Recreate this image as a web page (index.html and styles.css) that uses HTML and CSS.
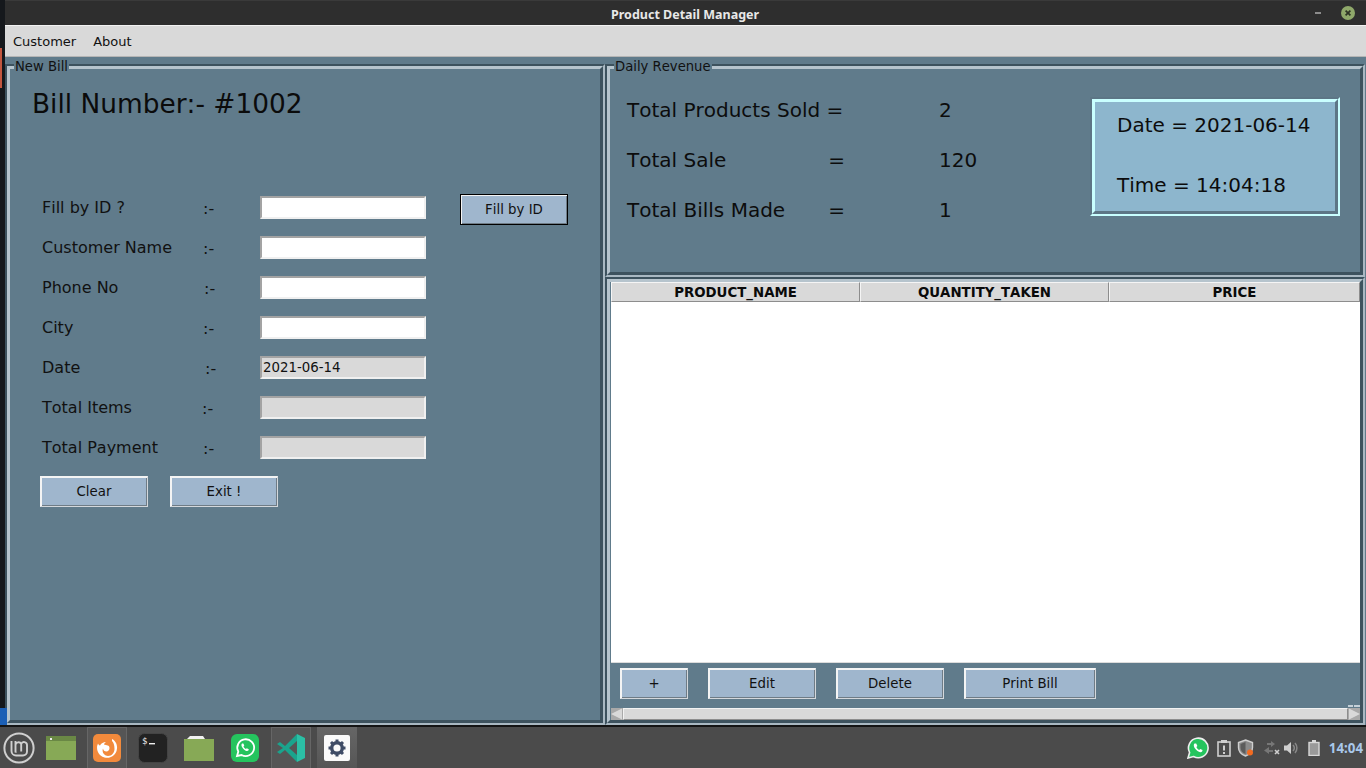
FILE: index.html
```html
<!DOCTYPE html>
<html lang="en">
<head>
<meta charset="utf-8">
<title>Product Detail Manager</title>
<link rel="stylesheet" href="styles.css">
</head>
<body>
<div class="desktop-edge"><span class="edge-red"></span><span class="edge-blue"></span></div>
<div class="window">
  <header class="titlebar">
    <span class="title">Product Detail Manager</span>
    <span class="win-min"></span>
    <span class="win-close"><svg viewBox="0 0 14 14" width="14" height="14"><circle cx="7" cy="7" r="7" fill="#8fa86a"/><path d="M4.6 4.6l4.8 4.8M9.4 4.6l-4.8 4.8" stroke="#2d3324" stroke-width="1.7"/></svg></span>
  </header>
  <nav class="menubar"><span class="menu-item">Customer</span><span class="menu-item">About</span></nav>
  <main class="workspace">
    <section class="frame frame-bill">
      <span class="legend">New Bill</span>
      <div class="frame-inner bill-inner">
        <h1 class="bill-number">Bill Number:- #1002</h1>
        <div class="form">
          <span class="f-label">Fill by ID ?</span><span class="f-colon">:-</span><span class="entry"></span><span class="btn btn-active">Fill by ID</span>
          <span class="f-label">Customer Name</span><span class="f-colon">:-</span><span class="entry"></span><span></span>
          <span class="f-label">Phone No</span><span class="f-colon shift-1">:-</span><span class="entry"></span><span></span>
          <span class="f-label">City</span><span class="f-colon">:-</span><span class="entry"></span><span></span>
          <span class="f-label">Date</span><span class="f-colon shift-2">:-</span><span class="entry entry-off">2021-06-14</span><span></span>
          <span class="f-label">Total Items</span><span class="f-colon shift-back">:-</span><span class="entry entry-off"></span><span></span>
          <span class="f-label">Total Payment</span><span class="f-colon">:-</span><span class="entry entry-off"></span><span></span>
        </div>
        <div class="form-actions"><span class="btn w108">Clear</span><span class="btn w108">Exit !</span></div>
      </div>
    </section>
    <div class="right-col">
      <section class="frame frame-revenue">
        <span class="legend">Daily Revenue</span>
        <div class="frame-inner revenue-inner">
          <div class="stats">
            <span>Total Products Sold =</span><span class="stat-val">2</span>
            <span class="stat-row"><span>Total Sale</span><span class="stat-eq">=</span></span><span class="stat-val">120</span>
            <span class="stat-row"><span>Total Bills Made</span><span class="stat-eq">=</span></span><span class="stat-val">1</span>
          </div>
          <div class="clock">
            <div class="clock-inner">
              <span class="clock-date">Date = 2021-06-14</span>
              <span class="clock-time">Time = 14:04:18</span>
            </div>
          </div>
        </div>
      </section>
      <section class="frame frame-table">
        <div class="frame-inner table-inner">
          <div class="thead"><span>PRODUCT_NAME</span><span>QUANTITY_TAKEN</span><span>PRICE</span></div>
          <div class="tbody"></div>
          <div class="table-actions">
            <span class="btn w68">+</span><span class="btn w108">Edit</span><span class="btn w108">Delete</span><span class="btn w132">Print Bill</span>
          </div>
          <div class="scrollbar">
            <span class="arrow"><svg viewBox="0 0 12 12" width="12" height="12"><path d="M0 6L11 .5v11z" fill="#d9d9d9"/></svg></span>
            <span class="trough"></span>
            <span class="arrow arrow-right"><svg viewBox="0 0 12 12" width="12" height="12"><path d="M12 6L1 .5v11z" fill="#d9d9d9"/></svg></span>
          </div>
        </div>
      </section>
    </div>
  </main>
  </div>
<footer class="taskbar">
  <span class="slot slot-menu">
    <svg viewBox="0 0 32 32" width="32" height="32"><circle cx="16" cy="16" r="14.6" fill="none" stroke="#cfcfcf" stroke-width="2"/><path d="M8.500 9v10a4.500 4.500 0 0 0 4.500 4.500h7a4 4 0 0 0 4-4v-6.500a3 3 0 0 0-5.800-1 3 3 0 0 0-5.700 1v7.500M18.200 12v7.500M12.500 9v10a1 1 0 0 0 1 1" fill="none" stroke="#cfcfcf" stroke-width="1.900"/></svg>
  </span>
  <span class="slot slot-w40">
    <svg viewBox="0 0 30 24" width="30" height="24"><rect width="30" height="24" fill="#87a956"/><rect width="30" height="5" fill="#6a8845"/><rect x="4" y="2" width="2" height="2" fill="#eee"/></svg>
  </span>
  <span class="slot slot-w40 slot-box">
    <svg viewBox="0 0 28 28" width="28" height="28"><rect width="28" height="28" rx="5" fill="#f28a3c"/><path d="M19 5c3 1.500 5.500 5 5 9.500A10 10 0 1 1 5 9.500c.5 1 1 1.600 2 2 1-2 3.500-3.500 6-3.500-1.500 1-2 2-2 2.500 2.500 1 5.500.5 5.500 3.500 0 2-1.500 3.500-3 3.500a3.500 3.500 0 0 1-3.500-3c-1.500 4 1.500 7.500 5 7.500 4 0 6.500-3.500 6.500-7 0-4-1-6.500-2.500-8z" fill="#fff"/></svg>
  </span>
  <span class="slot slot-w40">
    <svg viewBox="0 0 30 30" width="30" height="30"><rect x=".5" y=".5" width="29" height="29" rx="6" fill="#222" stroke="#444"/><text x="4" y="11" class="term-text">$</text><rect x="11" y="10" width="6" height="1.400" fill="#eee"/></svg>
  </span>
  <span class="slot slot-w40 slot-folder">
    <svg viewBox="0 0 30 26" width="30" height="26"><path d="M3 4l3-3h13l2 3z" fill="#f1f1f1"/><rect y="4" width="30" height="22" fill="#87a956"/></svg>
  </span>
  <span class="slot slot-w40 slot-wa">
    <svg viewBox="0 0 28 28" width="28" height="28"><rect width="28" height="28" rx="6" fill="#25c45e"/><path d="M6 22l1.300-4.400A8.400 8.400 0 1 1 10.600 21z" fill="none" stroke="#fff" stroke-width="1.800"/><path d="M11 9.500c-1 1-.8 3 1.200 5.200s4.200 2.800 5.200 1.800l.4-1.300-2-1-.9.800c-1-.4-2-1.500-2.400-2.500l.8-.9-1-2z" fill="#fff"/></svg>
  </span>
  <span class="slot slot-w40 slot-box slot-code">
    <svg viewBox="0 0 30 30" width="30" height="30"><path d="M21 1l8 4v20l-8 4z" fill="#2bbfa5"/><path d="M21 1L9 13l-5-4-3 2 6 4-6 4 3 2 5-4 12 12v-7l-8-7 8-7z" fill="#1aa48d"/></svg>
  </span>
  <span class="slot slot-w40 slot-settings">
    <svg viewBox="0 0 26 26" width="26" height="26"><rect width="26" height="26" rx="2" fill="#fafafa"/><circle cx="13" cy="13" r="5.300" fill="none" stroke="#3f4c66" stroke-width="3.400"/><path d="M13 4.500v3M13 18.500v3M4.500 13h3M18.500 13h3M7 7l2 2M17 17l2 2M19 7l-2 2M9 17l-2 2" stroke="#3f4c66" stroke-width="3"/></svg>
  </span>
  <span class="tray">
    <svg class="t-wa" viewBox="0 0 22 22" width="22" height="22"><path d="M1 21l1.600-5.500A9.800 9.800 0 1 1 6.500 19.500z" fill="#25c45e" stroke="#eee" stroke-width="1.600"/><path d="M7.500 6.500c-1.200 1.200-1 3.500 1.400 6s5 3.300 6.200 2.100l.5-1.500-2.400-1.200-1 1c-1.200-.5-2.400-1.800-2.800-3l1-1-1.200-2.400z" fill="#fff"/></svg>
    <svg class="t-clip" viewBox="0 0 16 18" width="16" height="18"><rect x="2" y="3" width="12" height="14" fill="none" stroke="#cfcfcf" stroke-width="1.600"/><rect x="5" y="1" width="6" height="3" fill="#cfcfcf"/><rect x="7" y="6.500" width="2" height="5" fill="#cfcfcf"/><rect x="7" y="13" width="2" height="2" fill="#cfcfcf"/></svg>
    <svg class="t-shield" viewBox="0 0 18 18" width="18" height="18"><path d="M8.500 1l7 2.500v5c0 4-3 7-7 8.500-4-1.500-7-4.500-7-8.500v-5z" fill="#8b8b8b" stroke="#cfcfcf" stroke-width="1.400"/><path d="M8.500 3v12c-3-1-5-3.500-5-6.500V5z" fill="#5c5c5c"/><circle cx="13" cy="13.500" r="3" fill="#f26b21"/></svg>
    <svg class="t-net" viewBox="0 0 18 16" width="18" height="16"><path d="M8 1l4 3-4 3V5H4V3h4zM6 7L1 10.500 6 14v-2h4v-2H6z" fill="#777"/><path d="M12 10l4 4M16 10l-4 4" stroke="#cfcfcf" stroke-width="1.600"/></svg>
    <svg class="t-spk" viewBox="0 0 16 16" width="16" height="16"><path d="M1 5.500h3L8 2v12L4 10.500H1z" fill="#cfcfcf"/><path d="M10 5a4.500 4.500 0 0 1 0 6M12 3a7.500 7.500 0 0 1 0 10" fill="none" stroke="#888" stroke-width="1.500"/></svg>
    <svg class="t-bat" viewBox="0 0 12 16" width="12" height="16"><rect x="1" y="2.500" width="10" height="13" fill="#9a9a9a" stroke="#d8d8d8" stroke-width="1.400"/><rect x="4" y="0" width="4" height="2" fill="#d8d8d8"/></svg>
    <span class="clock-tray">14:04</span>
  </span>
</footer>
</body>
</html>
```
FILE: styles.css
```css
* { box-sizing: border-box; }
html, body { margin: 0; height: 100%; }
body {
  position: relative;
  width: 1366px;
  height: 768px;
  overflow: hidden;
  background: #15181c;
  font-family: "DejaVu Sans", sans-serif;
  font-kerning: none;
  color: #000;
  display: flex;
  flex-direction: column;
}
.desktop-edge { position: absolute; left: 0; top: 0; width: 7px; height: 725px; }
.edge-red { position: absolute; left: 0; top: 48px; width: 2px; height: 40px; background: #c2563f; }
.edge-blue { position: absolute; left: 0; top: 708px; width: 7px; height: 17px; background: #1b5fb5; z-index: 2; }
.window {
  position: relative;
  height: 725px;
  margin-left: 5px;
  display: flex;
  flex-direction: column;
  flex: none;
}
.titlebar {
  position: relative;
  height: 25px;
  flex: none;
  background: #2e2e2e;
  border-top: 1px solid #3a3a3a;
  display: flex;
  align-items: center;
  justify-content: flex-end;
  padding-right: 11px;
}
.title {
  position: absolute;
  left: 606px;
  top: 6px;
  font: 700 12.500px/16px "Noto Sans", sans-serif;
  color: #e8e8e8;
}
.win-min { width: 6px; height: 2px; background: #8c8c8c; margin-right: 20px; }
.win-close { height: 14px; display: block; }
.win-close svg { display: block; }
.menubar {
  height: 32px;
  flex: none;
  background: #d9d9d9;
  border-top: 1px solid #f2f2f2;
  border-bottom: 1px solid #b5b5b5;
  display: flex;
  align-items: center;
  padding-left: 8px;
  gap: 17px;
  font-size: 13px;
  color: #111;
}
.workspace {
  flex: 1;
  background: #607b8b;
  display: flex;
  padding: 7px 1px 0 0;
  min-height: 0;
}
.frame {
  position: relative;
  border: 2px solid;
  border-color: #3d525e #a9b8c2 #a9b8c2 #3d525e;
}
.frame-inner {
  height: 100%;
  border: 3px solid;
  border-color: #b6c4cd #3d525e #3d525e #b6c4cd;
}
.legend {
  position: absolute;
  left: 7px;
  top: -7px;
  padding: 0 1px;
  background: #607b8b;
  font-size: 13.200px;
  line-height: 15px;
  color: #111;
  z-index: 1;
}
.frame-bill { width: 600px; flex: none; }
.bill-inner { padding-left: 32px; }
.bill-number {
  margin: 0 0 0 -10px;
  padding-top: 18px;
  font-size: 26.400px;
  font-weight: 400;
  line-height: 34px;
  height: 127px;
  color: #0b0b0b;
}
.form {
  display: grid;
  grid-template-columns: 162px 56px 166px 142px;
  grid-auto-rows: 40px;
  align-items: start;
  color: #111;
}
.f-label { font-size: 16px; line-height: 24px; }
.f-colon { font-size: 16px; line-height: 24px; margin: 1px 0 0 -1px; }
.shift-1 { padding-left: 1px; }
.shift-2 { padding-left: 2px; }
.shift-back { margin-left: -2px; }
.entry {
  display: block;
  height: 23px;
  background: #fff;
  border: 2px solid;
  border-color: #a3a3a3 #f0f0f0 #f0f0f0 #a3a3a3;
  font-size: 13.330px;
  line-height: 20px;
  padding-left: 1px;
}
.entry-off { background: #d9d9d9; }
.form > .btn { margin-left: 34px; margin-top: -2px; }
.btn {
  display: flex;
  align-items: center;
  justify-content: center;
  height: 31px;
  background: #9fb6cd;
  border: 1px solid;
  border-color: #f4f4f4 #d4d8dc #d4d8dc #f4f4f4;
  box-shadow: inset 1px 1px 0 #f4f4f4, inset -1px -1px 0 #6f7c86;
  font-size: 13.330px;
  color: #111;
}
.form > .btn-active { border-color: #000; }
.w68 { width: 68px; }
.w108 { width: 108px; }
.w132 { width: 132px; }
.form-actions { display: flex; gap: 22px; margin-left: -2px; }
.right-col { flex: 1; display: flex; flex-direction: column; min-width: 0; }
.frame-revenue { height: 213px; flex: none; }
.revenue-inner { display: flex; }
.stats {
  display: grid;
  grid-template-columns: 312px 100px;
  grid-auto-rows: 50px;
  padding: 16px 0 0 17px;
  font-size: 20px;
  line-height: 50px;
  color: #0c0c0c;
  height: 100%;
}
.stat-row { display: flex; }
.stat-row > span:first-child { flex: none; }
.stat-eq { margin-left: auto; margin-right: 94px; }
.clock {
  margin: 28px 0 0 51px;
  width: 250px;
  height: 119px;
  border: 2px solid;
  border-color: #5d7686 #c9ffff #c9ffff #5d7686;
  flex: none;
}
.clock-inner {
  height: 100%;
  background: #8db6cd;
  border: 3px solid;
  border-color: #c9ffff #5d7686 #5d7686 #c9ffff;
  font-size: 20px;
  color: #0c0c0c;
  display: flex;
  flex-direction: column;
  align-items: flex-start;
  padding-left: 22px;
  line-height: 24px;
}
.clock-date { margin-top: 11px; }
.clock-time { margin-top: 36px; }
.frame-table { flex: 1; min-height: 0; }
.table-inner { display: flex; flex-direction: column; padding-left: 1px; }
.thead {
  flex: none;
  height: 20px;
  display: grid;
  grid-template-columns: 249px 249px 1fr;
  grid-template-rows: 20px;
  background: #d9d9d9;
  font-size: 13.330px;
  font-weight: 700;
  color: #0a0a0a;
  text-align: center;
}
.thead span {
  border: 1px solid;
  border-color: #f5f5f5 #8d8d8d #8d8d8d #f5f5f5;
  padding-top: 2px;
  line-height: 16px;
}
.tbody { height: 361px; flex: none; background: #fff; border-bottom: 1px solid #dcdcdc; }
.table-actions {
  display: flex;
  gap: 20px;
  padding: 5px 0 0 9px;
  flex: none;
}
.scrollbar {
  margin-top: 9px;
  height: 12px;
  flex: none;
  display: flex;
  background: #d9d9d9;
}
.arrow { position: relative; width: 12px; height: 12px; background: #a9a9a9; display: block; flex: none; }
.arrow svg { display: block; }
.arrow-right::before {
  content: "";
  position: absolute;
  left: 0;
  right: 0;
  top: -3px;
  height: 2px;
  background: linear-gradient(90deg, #c4d0d8 0 5px, #607b8b 5px 6px, #c4d0d8 6px);
}
.trough {
  flex: 1;
  border: 1px solid;
  border-color: #f2f2f2 #8d8d8d #8d8d8d #f2f2f2;
}
.taskbar {
  flex: 1;
  min-height: 0;
  background: #4b4b4b;
  border-top: 2px solid #141414;
  display: flex;
  align-items: center;
  position: relative;
}
.slot {
  width: 40px;
  height: 41px;
  display: flex;
  align-items: center;
  justify-content: center;
  flex: none;
  margin-left: 6px;
}
.slot-menu { margin-left: 0; width: 38px; }
.slot-w40:nth-child(2) { margin-left: 3px; }
.slot-box { background: #555; border: 1px solid #666; border-bottom: 0; }
.term-text { font: 9px "DejaVu Sans Mono", monospace; fill: #eee; }
.slot-settings { background: linear-gradient(#666, #565656); }
.tray {
  margin-left: auto;
  display: flex;
  align-items: center;
  padding-right: 3px;
}
.t-clip { margin-left: 7px; }
.t-shield { margin-left: 5px; }
.t-net { margin-left: 8px; }
.t-spk { margin-left: 2px; }
.t-bat { margin-left: 9px; }
.clock-tray { font: 700 13.300px "Noto Sans", sans-serif; color: #a9c8ea; margin-left: 9px; }
```
